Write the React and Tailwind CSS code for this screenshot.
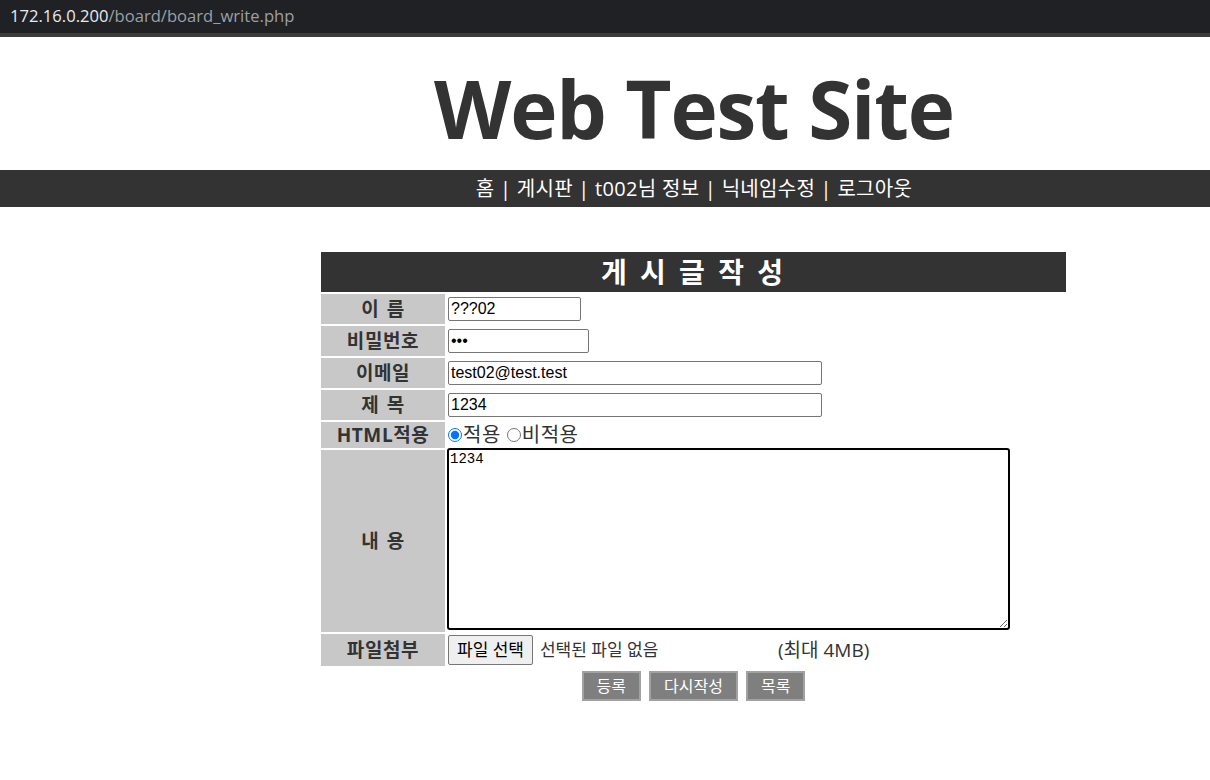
import React from 'react'

const ko = { fontFamily: '"Open Sans", "Noto Sans CJK KR", sans-serif' }
const arial = { fontFamily: '"Liberation Sans", "Noto Sans CJK KR", sans-serif' }

function Label({ children, className = '' }) {
  return (
    <div className={`bg-[#c8c8c8] flex items-center justify-center font-bold text-[19px] leading-none tracking-[0.6px] [word-spacing:2px] text-[#333] ${className}`}>
      {children}
    </div>
  )
}

function Field({ children, className = '' }) {
  return <div className={`flex items-center px-px ${className}`}>{children}</div>
}

export default function App() {
  return (
    <div className="w-[1210px] h-[780px] bg-white overflow-hidden" style={ko}>
      <div className="h-[33px] bg-[#202124] flex items-center pl-[10px] text-[16.6px]">
        <span className="text-[#e8eaed]">172.16.0.200</span>
        <span className="text-[#9aa0a6]">/board/board_write.php</span>
      </div>
      <div className="h-[4px] bg-[#3c3c3c]" />

      <div className="h-[133px] flex items-center justify-center pl-[178px] pt-[8px]">
        <h1 className="text-[80px] font-bold text-[#333] leading-none tracking-[-1.2px]">Web Test Site</h1>
      </div>

      <nav className="h-[37px] bg-[#333] flex items-center justify-center pl-[178px] text-white text-[20px] tracking-[0.3px]">
        홈 | 게시판 | t002님 정보 | 닉네임수정 | 로그아웃
      </nav>

      <div className="pl-[321px] pt-[45px]">
        <div className="w-[745px] grid grid-cols-[124px_1fr] gap-[2px]">
          <div className="col-span-2 h-[40px] bg-[#333] flex items-center justify-center text-white font-bold text-[28px] tracking-[3px]">
            게 시 글 작 성
          </div>

          <Label className="h-[30px]">이 름</Label>
          <Field className="h-[30px]">
            <input
              defaultValue="???02"
              className="w-[133px] h-[24px] border border-[#767676] rounded-[2px] px-[2px] text-[16px] text-black"
              style={arial}
            />
          </Field>

          <Label className="h-[30px]">비밀번호</Label>
          <Field className="h-[30px]">
            <input
              type="password"
              defaultValue="123"
              className="w-[141px] h-[24px] border border-[#767676] rounded-[2px] px-[2px] text-[16px] text-black"
              style={arial}
            />
          </Field>

          <Label className="h-[30px]">이메일</Label>
          <Field className="h-[30px]">
            <input
              defaultValue="test02@test.test"
              className="w-[374px] h-[24px] border border-[#767676] rounded-[2px] px-[2px] text-[16px] text-black"
              style={arial}
            />
          </Field>

          <Label className="h-[30px]">제 목</Label>
          <Field className="h-[30px]">
            <input
              defaultValue="1234"
              className="w-[374px] h-[24px] border border-[#767676] rounded-[2px] px-[2px] text-[16px] text-black"
              style={arial}
            />
          </Field>

          <Label className="h-[26px]">HTML적용</Label>
          <Field className="h-[26px] text-[20px] leading-none text-[#333] tracking-[0.5px]">
            <input type="radio" name="html" defaultChecked className="w-[14px] h-[14px] m-0 mr-[1px] accent-[#0075ff]" />
            <span>적용</span>
            <input type="radio" name="html" className="w-[14px] h-[14px] m-0 ml-[6px] mr-[1px]" />
            <span>비적용</span>
          </Field>

          <Label className="h-[182px]">내 용</Label>
          <div className="h-[182px] flex items-start">
            <textarea
              defaultValue="1234"
              className="w-[563px] h-[182px] -mt-[2px] border-2 border-black rounded-[3px] px-px pt-px text-[14px] leading-[17px] text-black outline-none resize-y"
              style={{ fontFamily: '"Liberation Mono", monospace' }}
            />
          </div>

          <Label className="h-[32px]">파일첨부</Label>
          <Field className="h-[32px] text-[17px] text-[#333]">
            <button className="h-[30px] px-[8px] bg-[#efefef] border border-[#767676] rounded-[2px] text-black text-[17px]">
              파일 선택
            </button>
            <span className="ml-[7px] w-[238px]">선택된 파일 없음</span>
            <span className="text-[19px]">(최대 4MB)</span>
          </Field>
        </div>

        <div className="w-[745px] flex justify-center gap-[8px] mt-[5px]">
          <button className="h-[30px] px-[13px] bg-[#7f7f7f] border-2 border-[#a2a2a2] text-white text-[16px]">등록</button>
          <button className="h-[30px] px-[13px] bg-[#7f7f7f] border-2 border-[#a2a2a2] text-white text-[16px]">다시작성</button>
          <button className="h-[30px] px-[13px] bg-[#7f7f7f] border-2 border-[#a2a2a2] text-white text-[16px]">목록</button>
        </div>
      </div>
    </div>
  )
}
